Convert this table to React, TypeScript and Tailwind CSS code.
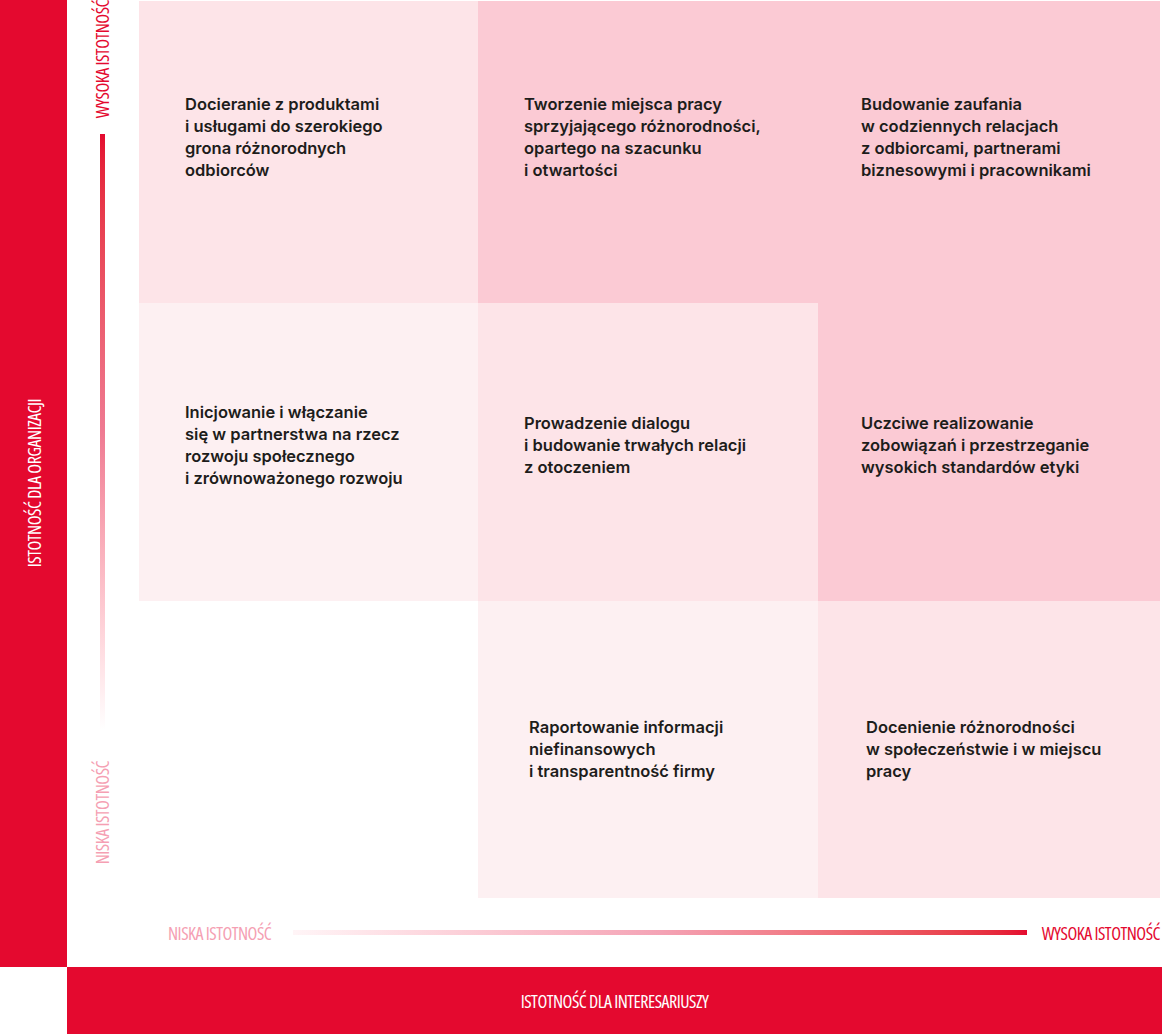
const red = 'bg-[#e4092f]';

type Cell = {
  lines: string[];
  bg: string;
  pad: string;
};

const rows: Cell[][] = [
  [
    {
      lines: ['Docieranie z produktami', 'i usługami do szerokiego', 'grona różnorodnych', 'odbiorców'],
      bg: 'bg-[#fde4e8]',
      pad: 'pl-[46px] pb-[30px]',
    },
    {
      lines: ['Tworzenie miejsca pracy', 'sprzyjającego różnorodności,', 'opartego na szacunku', 'i otwartości'],
      bg: 'bg-[#fbcad4]',
      pad: 'pl-[46px] pb-[30px]',
    },
    {
      lines: ['Budowanie zaufania', 'w codziennych relacjach', 'z odbiorcami, partnerami', 'biznesowymi i pracownikami'],
      bg: 'bg-[#fbcad4]',
      pad: 'pl-[43px] pb-[30px]',
    },
  ],
  [
    {
      lines: ['Inicjowanie i włączanie', 'się w partnerstwa na rzecz', 'rozwoju społecznego', 'i zrównoważonego rozwoju'],
      bg: 'bg-[#fdf0f2]',
      pad: 'pl-[46px] pb-[14px]',
    },
    {
      lines: ['Prowadzenie dialogu', 'i budowanie trwałych relacji', 'z otoczeniem'],
      bg: 'bg-[#fde4e8]',
      pad: 'pl-[46px] pb-[14px]',
    },
    {
      lines: ['Uczciwe realizowanie', 'zobowiązań i przestrzeganie', 'wysokich standardów etyki'],
      bg: 'bg-[#fbcad4]',
      pad: 'pl-[43px] pb-[14px]',
    },
  ],
  [
    { lines: [], bg: 'bg-white', pad: '' },
    {
      lines: ['Raportowanie informacji', 'niefinansowych', 'i transparentność firmy'],
      bg: 'bg-[#fdf0f2]',
      pad: 'pl-[51px] pb-[2px]',
    },
    {
      lines: ['Docenienie różnorodności', 'w społeczeństwie i w miejscu', 'pracy'],
      bg: 'bg-[#fde4e8]',
      pad: 'pl-[48px] pb-[2px]',
    },
  ],
];

const axisFont = "font-['Open_Sans',sans-serif] font-stretch-75% text-[18px] leading-none tracking-[-0.5px] whitespace-nowrap";

function VerticalLabel({ text, color }: { text: string; color: string }) {
  return (
    <span className={`${axisFont} ${color} [writing-mode:vertical-rl] rotate-180`}>{text}</span>
  );
}

export default function App() {
  return (
    <div className="w-[1162px] h-[1035px] bg-white">
      <div className="flex h-[967px]">
        <div className={`w-[67px] ${red} flex items-center justify-center`}>
          <VerticalLabel text="ISTOTNOŚĆ DLA ORGANIZACJI" color="text-white" />
        </div>

        <div className="w-[72px] flex flex-col items-center pr-[2px]">
          <div className="h-[118px] flex items-center justify-center">
            <VerticalLabel text="WYSOKA ISTOTNOŚĆ" color="text-[#e4092f]" />
          </div>
          <div className="mt-[16px] h-[596px] w-[5px] bg-linear-to-b from-[#e4092f] via-[#ef7a92] to-white" />
          <div className="mt-[32px] h-[102px] flex items-center justify-center">
            <VerticalLabel text="NISKA ISTOTNOŚĆ" color="text-[#f59fb3]" />
          </div>
        </div>

        <div className="flex-1 flex flex-col pr-[2px]">
          <div className="mt-[1px] grid grid-cols-[339px_340px_342px] grid-rows-[302px_298px_297px]">
            {rows.flat().map((cell, i) => (
              <div key={i} className={`${cell.bg} ${cell.pad} flex items-center`}>
                {cell.lines.length > 0 && (
                  <p className="font-['Inter',sans-serif] font-semibold text-[16.5px] leading-[22px] text-[#1d1d1b]">
                    {cell.lines.map((line, j) => (
                      <span key={j} className="block whitespace-nowrap">
                        {line}
                      </span>
                    ))}
                  </p>
                )}
              </div>
            ))}
          </div>

          <div className="flex-1 flex items-center pl-[29px]">
            <span className={`${axisFont} text-[#f59fb3]`}>NISKA ISTOTNOŚĆ</span>
            <div className="ml-[22px] flex-1 h-[5px] bg-linear-to-r from-[#fff5f7] via-[#f4a3b5] to-[#e4092f]" />
            <span className={`${axisFont} ml-[15px] text-[#e4092f]`}>WYSOKA ISTOTNOŚĆ</span>
          </div>
        </div>
      </div>

      <div className={`ml-[67px] h-[67px] ${red} flex items-center justify-center`}>
        <span className={`${axisFont} text-white`}>ISTOTNOŚĆ DLA INTERESARIUSZY</span>
      </div>
    </div>
  );
}
